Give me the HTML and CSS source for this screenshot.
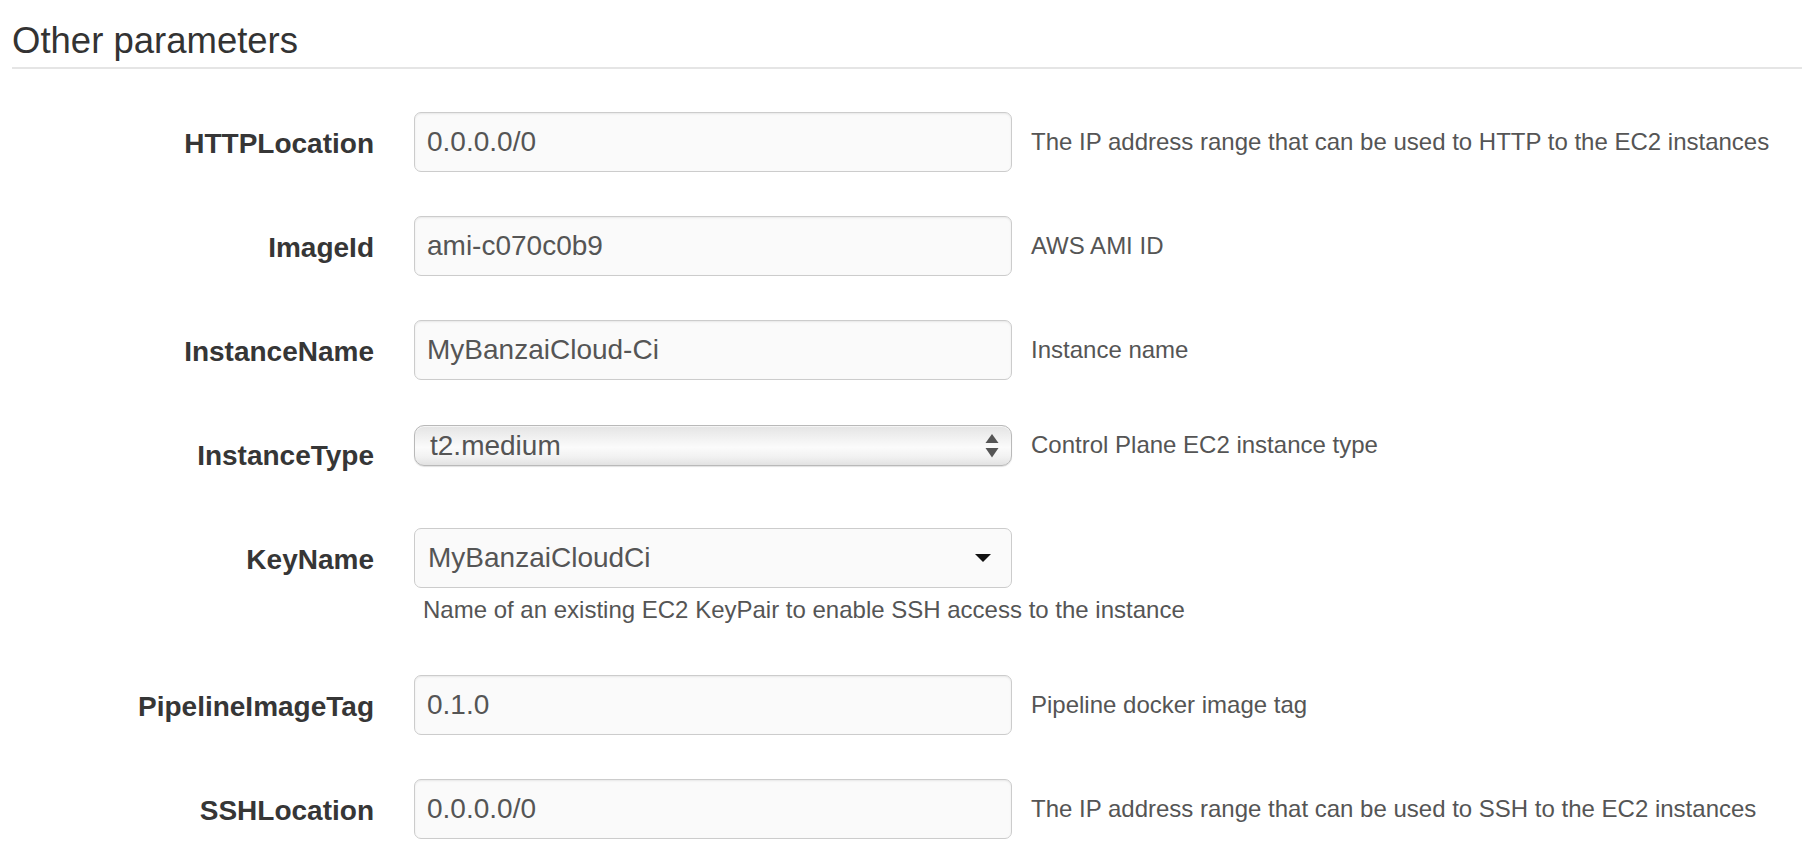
FILE: index.html
```html
<!DOCTYPE html>
<html lang="en">
<head>
<meta charset="utf-8">
<title>Other parameters</title>
<link rel="stylesheet" href="styles.css">
</head>
<body>
<div class="page">
  <h2 class="section-title">Other parameters</h2>
  <div class="form">
    <div class="row">
      <label class="label">HTTPLocation</label>
      <div class="ctrl">
        <div class="ctrl-line">
          <input class="field" type="text" value="0.0.0.0/0">
          <span class="desc">The IP address range that can be used to HTTP to the EC2 instances</span>
        </div>
      </div>
    </div>
    <div class="row">
      <label class="label">ImageId</label>
      <div class="ctrl">
        <div class="ctrl-line">
          <input class="field" type="text" value="ami-c070c0b9">
          <span class="desc">AWS AMI ID</span>
        </div>
      </div>
    </div>
    <div class="row">
      <label class="label">InstanceName</label>
      <div class="ctrl">
        <div class="ctrl-line">
          <input class="field" type="text" value="MyBanzaiCloud-Ci">
          <span class="desc">Instance name</span>
        </div>
      </div>
    </div>
    <div class="row">
      <label class="label">InstanceType</label>
      <div class="ctrl">
        <div class="ctrl-line">
          <div class="native-select">
            <span class="select-value">t2.medium</span>
            <svg class="updown" width="14" height="24" viewBox="0 0 14 24"><path d="M7 0 L13.5 9 L0.5 9 Z" fill="#555"/><path d="M0.5 14 L13.5 14 L7 23.5 Z" fill="#555"/></svg>
          </div>
          <span class="desc">Control Plane EC2 instance type</span>
        </div>
      </div>
    </div>
    <div class="row">
      <label class="label">KeyName</label>
      <div class="ctrl">
        <div class="ctrl-line">
          <div class="styled-select">
            <span class="select-value">MyBanzaiCloudCi</span>
            <svg class="caret" width="16" height="8" viewBox="0 0 16 8"><path d="M0 0 L16 0 L8 8 Z" fill="#111"/></svg>
          </div>
        </div>
        <div class="help">Name of an existing EC2 KeyPair to enable SSH access to the instance</div>
      </div>
    </div>
    <div class="row">
      <label class="label">PipelineImageTag</label>
      <div class="ctrl">
        <div class="ctrl-line">
          <input class="field" type="text" value="0.1.0">
          <span class="desc">Pipeline docker image tag</span>
        </div>
      </div>
    </div>
    <div class="row">
      <label class="label">SSHLocation</label>
      <div class="ctrl">
        <div class="ctrl-line">
          <input class="field" type="text" value="0.0.0.0/0">
          <span class="desc">The IP address range that can be used to SSH to the EC2 instances</span>
        </div>
      </div>
    </div>
  </div>
</div>
</body>
</html>
```
FILE: styles.css
```css
html, body {
  margin: 0;
  padding: 0;
  background: #ffffff;
}
body {
  font-family: "Liberation Sans", Arial, Helvetica, sans-serif;
  color: #333333;
  overflow: hidden;
}
.page {
  padding: 21px 0 0 0;
}
.section-title {
  margin: 0 0 0 12px;
  padding: 0 0 7px 0;
  font-size: 36.5px;
  line-height: 39px;
  font-weight: normal;
  color: #333333;
  border-bottom: 2px solid #e5e5e5;
}
.form {
  margin-top: 43px;
  display: flex;
  flex-direction: column;
  gap: 44px;
}
.row {
  display: flex;
  align-items: flex-start;
  min-height: 60px;
}
.label {
  width: 374px;
  flex: 0 0 374px;
  text-align: right;
  padding-top: 14px;
  font-size: 28px;
  line-height: 36px;
  font-weight: bold;
  color: #363636;
}
.ctrl {
  margin-left: 40px;
  display: flex;
  flex-direction: column;
}
.ctrl-line {
  display: flex;
  align-items: center;
}
.field {
  box-sizing: border-box;
  width: 598px;
  height: 60px;
  margin: 0;
  padding: 0 12px;
  border: 1px solid #cccccc;
  border-radius: 7px;
  background: #fafafa;
  box-shadow: inset 0 1px 2px rgba(0, 0, 0, 0.08);
  font-family: "Liberation Sans", Arial, Helvetica, sans-serif;
  font-size: 28px;
  color: #555555;
  outline: none;
}
.desc {
  margin-left: 19px;
  font-size: 24px;
  line-height: 34px;
  color: #555555;
  white-space: nowrap;
}
.native-select {
  box-sizing: border-box;
  width: 598px;
  height: 41px;
  margin-top: 1px;
  padding: 0 12px 0 15px;
  display: flex;
  align-items: center;
  justify-content: space-between;
  border: 1px solid #b9b9b9;
  border-radius: 10px;
  background: linear-gradient(to bottom, #e4e4e4 0%, #f3f3f3 35%, #fbfbfb 55%, #f1f1f1 80%, #e2e2e2 100%);
  box-shadow: 0 1px 1px rgba(0, 0, 0, 0.12), inset 0 1px 0 rgba(255, 255, 255, 0.6);
}
.select-value {
  font-size: 28px;
  line-height: 34px;
  color: #555555;
  white-space: nowrap;
}
.updown {
  display: block;
  flex: 0 0 auto;
}
.styled-select {
  box-sizing: border-box;
  width: 598px;
  height: 60px;
  padding: 0 20px 0 13px;
  display: flex;
  align-items: center;
  justify-content: space-between;
  border: 1px solid #cccccc;
  border-radius: 7px;
  background: #fafafa;
}
.caret {
  display: block;
  flex: 0 0 auto;
}
.help {
  margin: 5px 0 4px 9px;
  font-size: 24px;
  line-height: 34px;
  color: #555555;
  white-space: nowrap;
}
```
